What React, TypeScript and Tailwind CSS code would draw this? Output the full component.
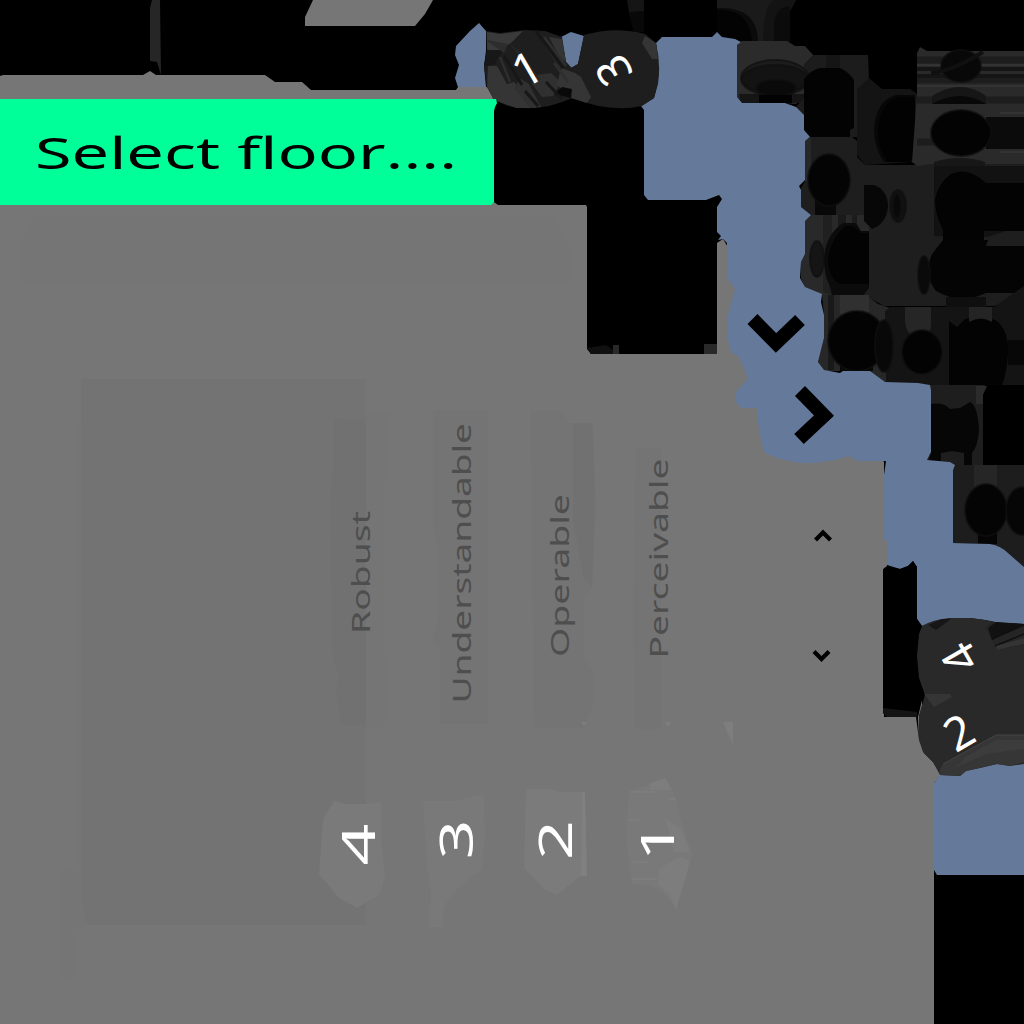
import React from 'react';

const FONT = '"Noto Sans", "Open Sans", sans-serif';

type Blob = [number, number, number, number, string];

/* Shadowed hollows: cx, cy, rx, ry, fill */
const hollows: Blob[] = [
  [775, 78, 34, 18, '#1c1c1c'],
  [775, 79, 33, 14, '#131313'],
  [776, 88, 20, 8, '#0a0a0a'],
  [829, 180, 21, 26, '#040404'],
  [817, 259, 7, 18, '#151515'],
  [898, 206, 8, 16, '#111111'],
  [897, 206, 4, 12, '#090909'],
  [924, 275, 6, 19, '#0a0a0a'],
  [961, 66, 20, 16, '#080808'],
  [961, 133, 30, 23, '#030303'],
  [857, 341, 29, 30, '#030303'],
  [884, 346, 9, 26, '#080808'],
  [922, 352, 20, 22, '#030303'],
  [986, 510, 21, 26, '#040404'],
  [1022, 511, 16, 24, '#060606'],
];

interface WordProps {
  x: number;
  from: number;
  length: number;
  children: string;
}

function VerticalWord({ x, from, length, children }: WordProps) {
  return (
    <text
      transform={`translate(${x} ${from}) rotate(-90)`}
      textLength={length}
      lengthAdjust="spacingAndGlyphs"
      fontSize={24.5}
      fontFamily={FONT}
      fill="#4e4e4e"
    >
      {children}
    </text>
  );
}

interface DigitProps {
  x: number;
  y: number;
  angle: number;
  stretch?: number;
  size?: number;
  children: string;
}

function Digit({ x, y, angle, stretch = 1, size = 46, children }: DigitProps) {
  return (
    <text
      transform={`translate(${x} ${y}) rotate(${angle}) scale(${stretch} 1)`}
      y={size * 0.357}
      textAnchor="middle"
      fontSize={size}
      fontFamily={FONT}
      fill="#ffffff"
    >
      {children}
    </text>
  );
}

function DarkCells() {
  return (
    <g>
      <path d="M152 0H160L161 75L157 62L150 61V8Z" fill="#262626" />
      <path d="M627 0H644V32H634Q629 14 627 0Z" fill="#151515" />
      <path d="M630 12L644 11V32H634L631 22Z" fill="#080808" />
      <path d="M717 0H796L789 13V42H717Z" fill="#1a1a1a" />
      <path d="M717 8Q758 6 758 42H717Z" fill="#0b0b0b" />
      <path d="M717 10Q750 8 752 42H717Z" fill="#030303" />
      <path d="M763 42Q763 8 773 0H796L789 13V42Z" fill="#131313" />
      <path d="M774 42V22Q778 5 790 7V42Z" fill="#0b0b0b" />

      <path d="M737 45L742 41H787L795 46H805L814 56L804 65V96L796 104L785 103H742L737 97Z" fill="#2b2b2b" />
      <path d="M739 94H804V103H740Z" fill="#151515" />
      <path d="M804 64L813 55H868L869 80L860 90V137H811L804 130L796 107L804 98Z" fill="#1c1c1c" />
      <path d="M826 55H840V80H826Z" fill="#151515" />
      <path d="M857 89L869 78L882 89H910L917 94V156L912 162L865 165L857 155Z" fill="#141414" />
      <path d="M915 95H896Q876 100 874 130Q875 150 884 162H910L915 157Z" fill="#070707" />
      <path d="M915 97H900Q880 102 878 130Q879 152 888 162H910L915 157Z" fill="#020202" />

      <path d="M805 141L811 137H852L857 141V157L865 165H914L934 164H1024V286L1000 304L994 306H884L866 296L805 287L801 278V262L805 254V221L811 215L801 207V188L805 181Z" fill="#1e1e1e" />
      <path d="M805 141L811 137V182L805 181Z" fill="#282828" />
      <path d="M805 221L811 215H865L869 221V288L865 295H822L805 288L801 278V262L805 254Z" fill="#292929" />
      <path d="M823 215H832V295L823 292Z" fill="#202020" />
      <path d="M838 215H846V240H838Z" fill="#1a1a1a" />
      <path d="M852 215H857V232H852Z" fill="#1c1c1c" />
      <path d="M869 231H861L856 223H843Q825 235 824 260Q825 278 829 284L832 295H864L869 288Z" fill="#0b0b0b" />
      <path d="M869 233H861L853 226H846Q831 237 828 260Q830 280 840 284H869Z" fill="#030303" />
      <path d="M815 196H836V215H815Z" fill="#080808" />

      <path d="M917 53L920 47L927 51H1024V164H934L917 166L912 162L917 94Z" fill="#2a2a2a" />
      <path d="M917 60H1024M917 80H1024M917 100H1024M917 142H1024" stroke="#1d1d1d" strokeWidth="7" fill="none" />
      <path d="M917 65H1024M917 86H1024M1000 113H1024M1000 152H1024" stroke="#333333" strokeWidth="2" fill="none" />
      <path d="M917 69H1024M917 76H1024" stroke="#151515" strokeWidth="4" fill="none" />
      <path d="M986 117H1024V149H986Z" fill="#0b0b0b" />
      <path d="M932 104V96Q961 78 986 96V104Z" fill="#161616" />
      <path d="M932 104Q961 88 986 104Z" fill="#080808" />
      <path d="M934 162Q960 154 985 162V166H934Z" fill="#171717" />
      <path d="M934 166H1024V225L988 237L934 236Z" fill="#121212" />
      <path d="M986 183H1024V231H984V243H943V230Q935 214 935 200Q938 183 951 174Q968 166 986 183Z" fill="#030303" />
      <path d="M986 246H1024V293H986Q960 305 936 291Q923 275 932 254L943 240H988Z" fill="#040404" />
      <path d="M946 297H986V307H946Z" fill="#0f0f0f" />
      <path d="M864 185H874Q888 190 888 207Q886 224 872 229L864 221Z" fill="#070707" />

      <path d="M822 295H866L878 304L890 308V384L883 382L870 371H824L818 362L824 338V315Z" fill="#272727" />
      <path d="M840 295H869V314H840Z" fill="#303030" />
      <path d="M828 295H834V370H828Z" fill="#191919" />
      <path d="M840 360H873V371H840Z" fill="#080808" />
      <path d="M885 311L891 307H994L1024 286V385H929L886 382Z" fill="#141414" />
      <path d="M905 307H931V324Q930 340 923 343Q907 338 905 322Z" fill="#262626" />
      <path d="M949 321L957 327L965 319Q982 314 997 321Q1009 332 1008 352Q1007 373 1002 385H949Z" fill="#030303" />
      <path d="M969 307H992V322Q981 315 969 322Z" fill="#242424" />
      <path d="M1008 340H1024V365H1008Z" fill="#070707" />

      <path d="M930 385H985L983 390V465H954L950 462L927 460L931 452Z" fill="#1e1e1e" />
      <path d="M976 386H987L983 395V404H976Z" fill="#2b2b2b" />
      <path d="M931 404Q943 402 950 409L960 408L970 402Q978 406 979 430Q978 446 972 453V465H964V453L952 451L941 453V462L929 460L931 453Z" fill="#060606" />
      <path d="M953 465H1024V567L1003 549L990 544L953 543Z" fill="#1d1d1d" />
      <path d="M974 465H997V490H974Z" fill="#262626" />
      <path d="M978 530H997V544H978Z" fill="#050505" />

      {hollows.map(([cx, cy, rx, ry, fill]) => (
        <ellipse
          key={`${cx}-${cy}-${fill}`}
          cx={cx}
          cy={cy}
          rx={rx}
          ry={ry}
          fill={fill}
          stroke="#101010"
          strokeOpacity={0.7}
          strokeWidth={2}
        />
      ))}
      <path d="M759 95H792V103H759Z" fill="#020202" />
      <path d="M804 79Q811 70 820 68H840Q849 72 854 80V128L850 130V137H808L804 130Z" fill="#030303" />
      <path d="M931 73Q950 72 983 52" stroke="#101010" strokeWidth="4" fill="none" />
    </g>
  );
}

function Badges() {
  return (
    <g>
      <path d="M486 31L500 33L525 30L545 31L562 37L566 62L572 68L578 64L584 35Q615 26 645 34L656 43Q661 64 658 84L654 98L642 106Q610 113 572 98Q540 113 508 106L494 100L487 87L484 66L487 50Z" fill="#1e1e1e" />
      <path d="M487 32L500 34L523 31L512 42L501 50H487Z" fill="#3a3a3a" />
      <path d="M487 50H503L494 65L484 66Z" fill="#171717" />
      <path d="M487 41L504 53L508 44L488 40Z" fill="#2d2d2d" />
      <path d="M488 66L497 66L507 84L514 82L536 108L516 108L494 100L487 87Z" fill="#353535" />
      <path d="M519 78L529 84L541 107L530 108L515 89Z" fill="#303030" />
      <path d="M537 75L551 73L561 82L553 96L542 97L532 84Z" fill="#303030" />
      <path d="M549 37L562 39L566 62L560 58Z" fill="#343434" />
      <path d="M561 68L575 73L581 77L591 97L587 103L571 98L557 85Z" fill="#353535" />
      <path d="M562 87L572 89L571 98L554 94Z" fill="#090909" />
      <path d="M645 36L656 43L658 59H652L642 43Z" fill="#353535" />
      <path d="M538 33L561 68M544 37L566 66M500 57L510 82M554 63L568 82" stroke="#2e2e2e" strokeWidth="2.5" fill="none" />
      <path d="M517 49L540 80M511 45L530 66" stroke="#262626" strokeWidth="1.5" fill="none" />
      <path d="M536 31L563 68M504 56L522 85M546 82L562 99M525 91L538 106" stroke="#171717" strokeWidth="3" fill="none" />

      <path d="M922 626Q934 619 950 618H970L985 620L1000 623L1024 624V764L1010 766L997 764L980 768L966 771L960 776L940 775L933 762L923 752L919 740V715L925 695L919 678L917 656L919 634Z" fill="#292929" />
      <path d="M924 694L950 694L952 697L934 707Z" fill="#353535" />
      <path d="M928 625L936 630L951 619H942Z" fill="#161616" />
      <path d="M985 627L992 622L1024 624V645L997 650Z" fill="#252525" />
      <path d="M988 628L996 622L1024 624L992 640Z" fill="#111111" />
      <path d="M992 639L1024 625M995 646L1024 634" stroke="#0f0f0f" strokeWidth="1.5" fill="none" />
      <path d="M996 646L1024 638V644L997 650Z" fill="#343434" />
      <path d="M940 769L943 764L996 735H1024V762L1010 766L997 764L966 771L960 776L940 775Z" fill="#363636" />
      <path d="M967 756L996 740H1024V749L986 754L955 768Z" fill="#3c3c3c" />
      <path d="M943 764L996 735H1024" stroke="#444444" strokeWidth="1" fill="none" />
      <Digit x={527} y={69} angle={-30}>1</Digit>
      <Digit x={613.5} y={70} angle={-120}>3</Digit>
      <Digit x={960} y={658} angle={-120}>4</Digit>
      <Digit x={959} y={732.5} angle={-30}>2</Digit>
    </g>
  );
}

function FaintPanels() {
  return (
    <g>
      <path d="M22 240L35 215H555L570 250V283H20Z" fill="#757575" />
      <path d="M76 430L81 424H89V925H85L76 935Z" fill="#757575" />
      <path d="M81 379H366V925H88L81 900Z" fill="#737373" />
      <path d="M366 413H390V460L384 483L385 668L389 710L383 728H366Z" fill="#757575" />
      <path d="M334 419L366 420V725H341L336 688L340 676L333 659L330 500L333 470Z" fill="#717171" />
      <path d="M433 410H488V724H440V650L433 640L438 620V545L433 530Z" fill="#747474" />
      <path d="M531 411H563L568 423H593L596 510L592 587L584 600V655L593 672V706L583 728H534Z" fill="#747474" />
      <path d="M573 423H592L595 490L592 586L584 580L573 520Z" fill="#717171" />
      <path d="M636 448H661V729H635V665L633 630Z" fill="#747474" />
      <path d="M581 722H587L584 726ZM665 722H671L668 727ZM723 722H733V745Z" fill="#7e7e7e" />
      <path d="M60 875Q66 865 76 869V980H60Z" fill="#757575" />
      <path d="M334 801L347 804H366L381 802V836L385 877L379 895L357 908L339 898L319 874L323 819Z" fill="#7a7a7a" />
      <path d="M423 801H455L484 794L485 835L482 870Q450 890 444 909L443 927H429L431 890L427 868Z" fill="#797979" />
      <path d="M526 789H550L560 792H585L587 876H580L557 895L545 890L524 868Z" fill="#7b7b7b" />
      <path d="M582 792H585L587 876H581Z" fill="#808080" />
      <path d="M629 791L648 785L665 778L676 798L682 824L692 853L684 885L676 910Q664 884 632 884L626 835Z" fill="#797979" />
      <path d="M650 783L665 778L672 790H650ZM665 818L681 829L690 852H674ZM659 869L680 856L690 862L676 910L670 895L658 884Z" fill="#7d7d7d" />
      <path d="M631 792H655M629 820H639M633 862H648M632 879H657M668 799H676" stroke="#7d7d7d" strokeWidth="2" fill="none" />
    </g>
  );
}

export default function App() {
  return (
    <main className="h-[1024px] w-[1024px] overflow-hidden bg-black">
      <svg className="block h-full w-full" viewBox="0 0 1024 1024" role="img" aria-label="Floor map">
        <path
          d="M0 76L3 75H143L150 71L156 75H265L275 82H302L311 90H456L458 87H487L494 94V202L498 205H586L587 207V349L591 354H717V243L723 239L760 300L884 462V717H916L919 740L924 753L933 762L941 775L934 783V1024H0Z"
          fill="#767676"
        />
        <path d="M313 0H433L425 14L415 26H305V17Z" fill="#767676" />
        <FaintPanels />
        <DarkCells />
        <path
          d="M656 43L662 37H712L717 32L722 37L735 39L741 42L737 45V97L742 103H785L796 107L804 115V130L810 137L805 141V180L799 186L801 190V207L811 215L805 221V254L801 262L800 278L805 287L822 294L821 302L824 315V338L818 362L824 370L840 373L843 371H870L885 382L918 383L930 385L931 390V452L927 460L950 462L955 465L953 470V543L990 544Q1001 546 1008 553L1024 567V624L1000 623L985 620L970 618H950L935 622L922 626L917 619V567L913 561L908 566L900 569L890 567L887 565V543L884 540V475L886 461H858L848 456L835 460L815 463H800L780 459L765 453Q759 440 757 408H741L736 402V392L748 379L743 366L738 356L731 352L728 340V315L735 289L727 278V243L723 239L718 240L721 236L717 232V207L722 199L719 195L706 200H648L644 195V110L641 106L654 98Q661 75 656 43Z"
          fill="#65799b"
        />
        <path d="M456 46L470 31L479 23L486 31V51L484 66L486 87H458L455 78L459 65L455 55Z" fill="#65799b" />
        <path d="M561 37L571 32L584 36L578 64L571 68L566 62Z" fill="#65799b" />
        <path d="M940 775L966 765L1024 760V875H937L934 870V783Z" fill="#65799b" />
        <path d="M883 569L887 565L900 569L908 566L913 561L917 567V619L922 626V717H887L883 713Z" fill="#000000" />
        <path d="M883 540H887V566L883 569Z" fill="#767676" />
        <path d="M883 708L917 712V717H887L883 713Z" fill="#141414" />
        <path d="M918 717L922 700V750L919 740Z" fill="#767676" />
        <path d="M587 348L606 345L613 350V354H591Z" fill="#101010" />
        <path d="M613 345H619V354H613ZM704 344H717V354H704Z" fill="#292929" />
        <Badges />
        <path d="M752.5 319L776 343L800 320" fill="none" stroke="#000000" strokeWidth="14" />
        <path d="M800 391L824 415.5L799 439" fill="none" stroke="#000000" strokeWidth="14" />
        <path d="M815.5 540L823 532.5L830.5 540M814 651.5L821.5 659L829 651.5" fill="none" stroke="#000000" strokeWidth="4.2" />
        <path d="M0 99H496L497 103L495 107L494 111V202L491 205H0Z" fill="#00ff99" />
        <text
          x={35}
          y={169}
          fontSize={43}
          fontFamily={FONT}
          textLength={422}
          lengthAdjust="spacingAndGlyphs"
          className="[font-kerning:none]"
          fill="#000000"
        >
          Select floor....
        </text>
        <VerticalWord x={370} from={634} length={123}>Robust</VerticalWord>
        <VerticalWord x={471} from={703.5} length={280.5}>Understandable</VerticalWord>
        <VerticalWord x={568.5} from={657} length={163}>Operable</VerticalWord>
        <VerticalWord x={667.5} from={658.5} length={200}>Perceivable</VerticalWord>
        <Digit x={358.5} y={844.5} angle={-90} stretch={1.6}>4</Digit>
        <Digit x={456.5} y={839.5} angle={-90} stretch={1.55} size={45}>3</Digit>
        <Digit x={556} y={840} angle={-90} stretch={1.55} size={45}>2</Digit>
        <Digit x={657.5} y={841.5} angle={-90} stretch={1.5} size={45.5}>1</Digit>
      </svg>
    </main>
  );
}
